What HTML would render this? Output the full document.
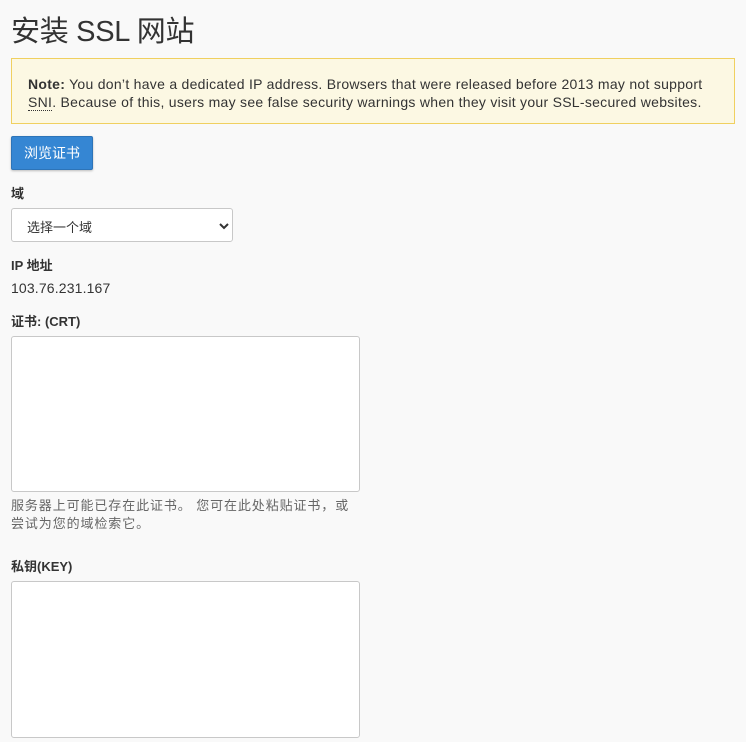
<!DOCTYPE html>
<html><head><meta charset="utf-8"><style>
body{margin:0;width:746px;height:742px;background:#f9f9f9;font-family:"Liberation Sans","Noto Sans CJK SC",sans-serif;color:#333;overflow:hidden;position:relative}
.a{position:absolute;white-space:nowrap}
h1{position:absolute;left:11px;top:10px;margin:0;font-size:29px;font-weight:normal;color:#333;line-height:44px;letter-spacing:-0.3px}
.alert{position:absolute;left:11px;top:58px;width:724px;height:66px;background:#fcf8e3;border:1px solid #f0d060;box-sizing:border-box}
.alert div{position:absolute;left:16px;font-size:14px;line-height:18px;white-space:nowrap;letter-spacing:0.28px}
.btn{position:absolute;left:11px;top:136px;width:82px;height:34px;background:#3586d3;border:1px solid #2d74b8;box-sizing:border-box;border-radius:2px;color:#fff;font-size:14px;line-height:32px;text-align:center;box-shadow:0 1px 2px rgba(0,0,0,.25)}
.lbl{font-size:13px;font-weight:bold;line-height:16px}
.box{position:absolute;background:#fff;border:1px solid #c8c8c8;border-radius:3px;box-sizing:border-box}
.help{font-size:13px;color:#666;line-height:18px;letter-spacing:0.9px}
</style></head><body>
<h1>安装 SSL 网站</h1>
<div class="alert">
<div style="top:16px"><b>Note:</b> You don’t have a dedicated IP address. Browsers that were released before 2013 may not support</div>
<div style="top:34px"><span style="border-bottom:1px dotted #333">SNI</span>. Because of this, users may see false security warnings when they visit your SSL-secured websites.</div>
</div>
<div class="btn">浏览证书</div>
<div class="a lbl" style="left:11px;top:186px">域</div>
<div class="box" style="left:11px;top:208px;width:222px;height:34px"><span class="a" style="left:15px;top:8px;font-size:13px;color:#333">选择一个域</span>
<svg class="a" style="left:207px;top:13px" width="10" height="8" viewBox="0 0 10 8"><path d="M1 2l4 4 4-4" stroke="#333" stroke-width="2" fill="none"/></svg></div>
<div class="a lbl" style="left:11px;top:258px">IP 地址</div>
<div class="a" style="left:11px;top:280px;font-size:14px;letter-spacing:0.15px">103.76.231.167</div>
<div class="a lbl" style="left:11px;top:314px">证书: (CRT)</div>
<div class="box" style="left:11px;top:336px;width:349px;height:156px"></div>
<div class="a help" style="left:11px;top:497px">服务器上可能已存在此证书。 您可在此处粘贴证书，或</div>
<div class="a help" style="left:11px;top:515px">尝试为您的域检索它。</div>
<div class="a lbl" style="left:11px;top:559px">私钥(KEY)</div>
<div class="box" style="left:11px;top:581px;width:349px;height:157px"></div>
</body></html>
